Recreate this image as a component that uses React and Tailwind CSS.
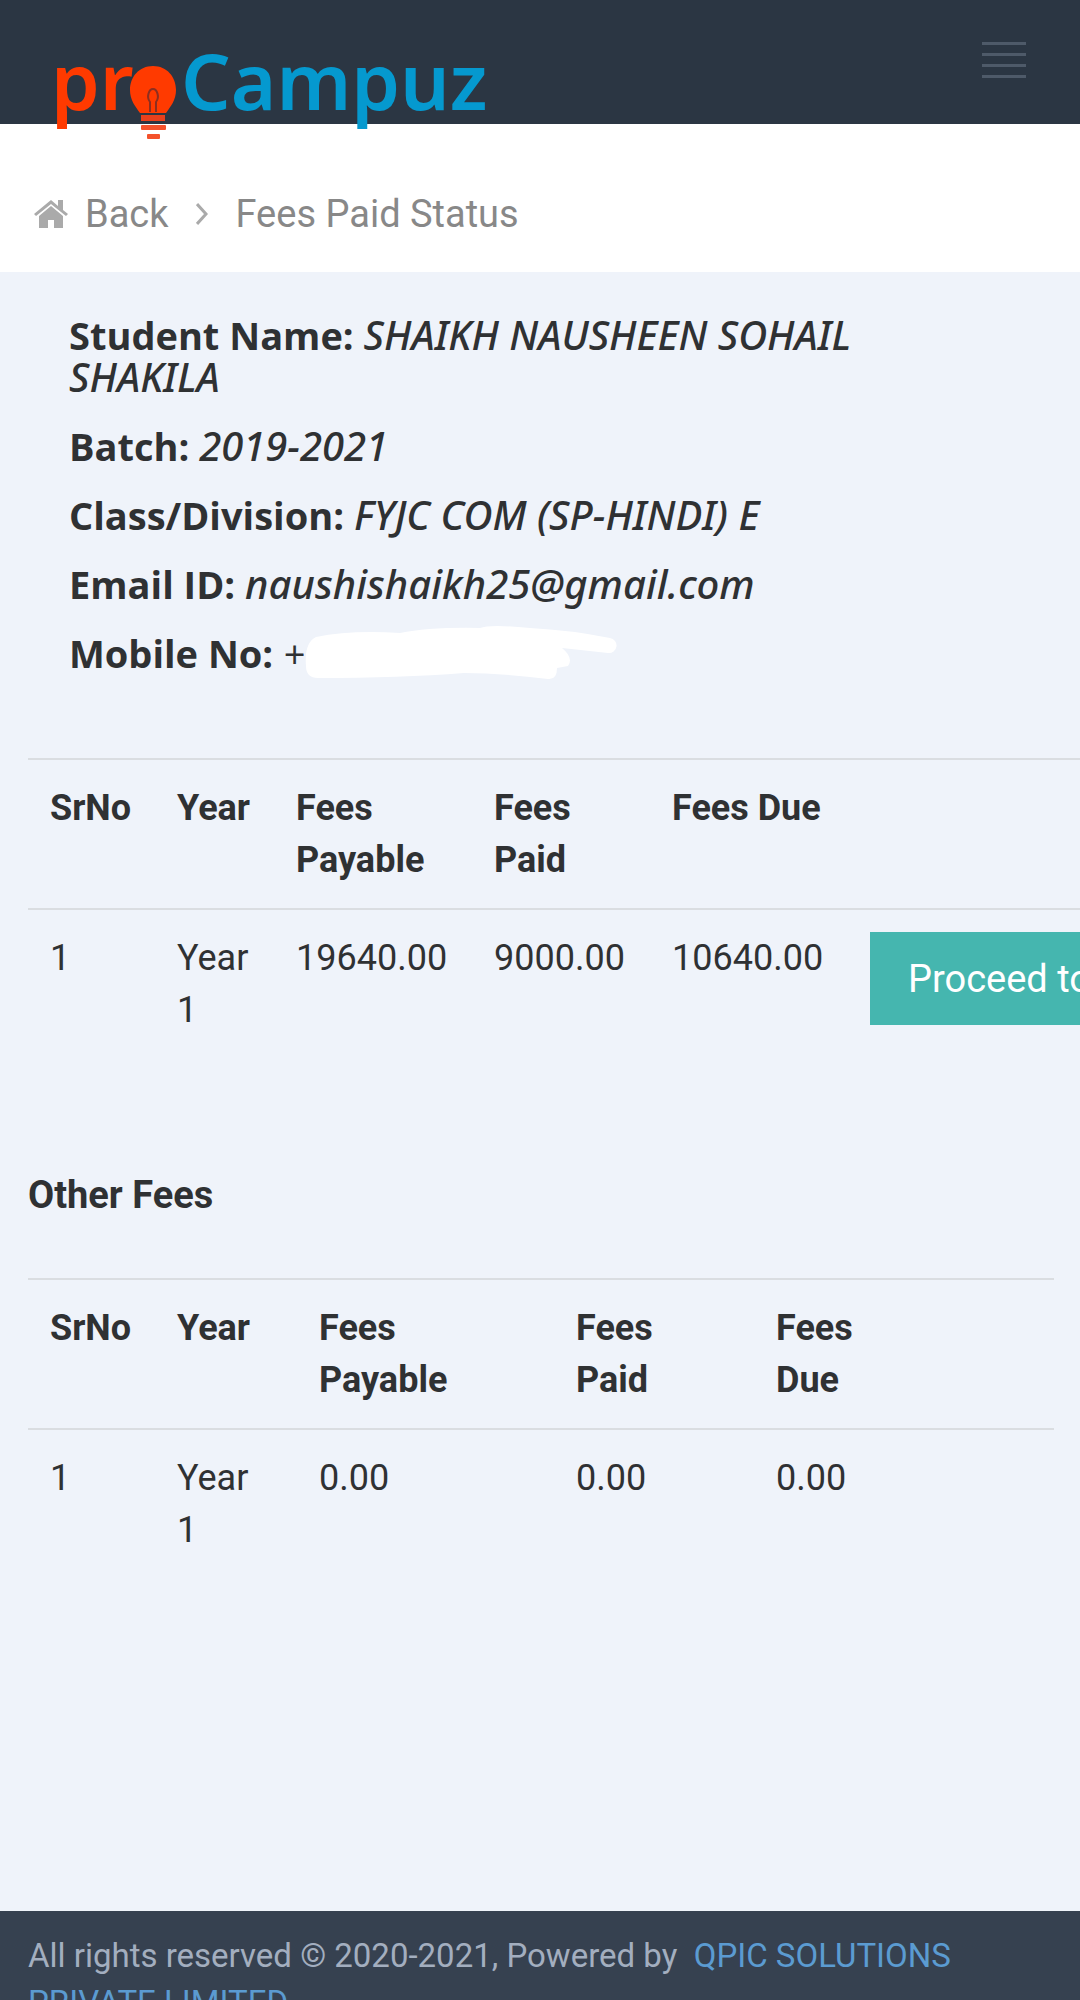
import React from 'react';

const STUDENT = [
  { label: 'Student Name:', value: 'SHAIKH NAUSHEEN SOHAIL SHAKILA' },
  { label: 'Batch:', value: '2019-2021' },
  { label: 'Class/Division:', value: 'FYJC COM (SP-HINDI) E' },
  { label: 'Email ID:', value: 'naushishaikh25@gmail.com' },
];

const Logo = () => (
  <svg width="460" height="104" viewBox="40 40 460 104" role="img" aria-label="proCampuz">
    <g fontSize="78" fontWeight="600" fontFamily="'Noto Sans', sans-serif">
      <text x="51" y="110" fill="#ff3a00">pr</text>
      <text x="181" y="110" fill="#0599cf">Campuz</text>
    </g>
    <path d="M153 66C139 66 130 77 130 90C130 100 135 106 140 113H166C171 106 176 100 176 90C176 77 167 66 153 66Z" fill="#ff3a00" />
    <path d="M150 112V102C146 97 149 89 153 89C157 89 160 97 156 102V112" fill="none" stroke="#8c2f20" strokeWidth="2" />
    <rect x="141" y="115" width="24" height="6" fill="#e8401c" />
    <rect x="141" y="125" width="25" height="5" rx="1" fill="#f4522c" />
    <rect x="147" y="134" width="13" height="5" rx="1" fill="#f4522c" />
  </svg>
);

const Header = () => (
  <header className="relative z-10 flex h-[124px] shrink-0 items-start justify-between bg-[#2b3643] pr-[54px] pl-10">
    <a href="#home" className="pt-10">
      <Logo />
    </a>
    <button type="button" aria-label="Toggle menu" className="mt-[42px] flex flex-col gap-2">
      {[0, 1, 2, 3].map((bar) => (
        <span key={bar} className="h-[3px] w-11 bg-[#4e5a69]" />
      ))}
    </button>
  </header>
);

const Breadcrumb = () => (
  <nav className="flex h-[148px] shrink-0 items-center bg-white pt-8 pl-[34px] text-[38px] leading-[54px] text-[#888888]">
    <svg width="34" height="30" viewBox="0 0 34 30" fill="#aaaaaa" aria-hidden="true">
      <path d="M17 7L5 17v12h9v-8h6v8h9V17z" />
      <path d="M17 1L0 15l2 2L17 5l15 12 2-2-5-4V1h-5v6z" />
    </svg>
    <a href="#back" className="ml-[17px]">Back</a>
    <svg className="ml-[27px]" width="12" height="22" viewBox="0 0 12 22" fill="none" stroke="#aaaaaa" strokeWidth="3" aria-hidden="true">
      <path d="M1 1l9 10L1 21" />
    </svg>
    <span className="ml-7">Fees Paid Status</span>
  </nav>
);

const StudentDetails = () => (
  <section className="flex flex-col gap-[27px] pr-[200px] pl-[69px] font-['Open_Sans',sans-serif] text-[38px] leading-[42px]">
    {STUDENT.map((item) => (
      <p key={item.label}>
        <strong className="font-bold">{item.label}</strong>{' '}
        <em className="font-['Noto_Sans',sans-serif] text-[40px] font-medium">{item.value}</em>
      </p>
    ))}
    <p className="relative">
      <strong className="font-bold">Mobile No:</strong> <em>+</em>
      <svg className="absolute -top-2 left-[234px]" width="316" height="56" viewBox="303 626 316 56" fill="#ffffff" aria-hidden="true">
        <path d="M316 639Q350 632 400 635Q430 629 480 630Q490 626 530 630Q570 632 610 640A7 7 0 0 1 608 655L562 650Q574 660 568 668L557 670Q557 682 548 681Q500 675 464 675Q400 680 318 680Q306 680 306 668Q304 645 316 639Z" />
      </svg>
    </p>
  </section>
);

const FeesTable = ({ columns, row, action, className }) => (
  <table className={`text-left text-[36px] leading-[52px] ${className}`}>
    <thead>
      <tr className="border-y-2 border-[#dadde1]">
        {columns.map((column) => (
          <th key={column.name} scope="col" className={`px-[22px] py-[22px] align-top font-bold ${column.width}`}>
            {column.name}
          </th>
        ))}
        <td />
      </tr>
    </thead>
    <tbody>
      <tr>
        {row.map((cell, i) => (
          <td key={columns[i].name} className="px-[22px] py-[22px] align-top">{cell}</td>
        ))}
        <td className="px-[22px] pt-[22px] align-top">{action}</td>
      </tr>
    </tbody>
  </table>
);

const Footer = () => (
  <footer className="shrink-0 bg-[#364150] px-7 py-[21px] text-[33px] leading-[47px] text-[#a3aebf]">
    All rights reserved © 2020-2021, Powered by&nbsp;{' '}
    <a href="#qpic" className="text-[#5b9bd1]">QPIC SOLUTIONS PRIVATE LIMITED</a>
  </footer>
);

export default function App() {
  return (
    <div className="flex h-screen flex-col overflow-hidden bg-[#eff3fa] font-[Roboto,sans-serif] text-[#2f3133]">
      <Header />
      <Breadcrumb />
      <main className="flex-1 shrink-0 pt-[42px] pb-[333px]">
        <StudentDetails />
        <div className="mt-[84px] overflow-hidden pl-7">
          <FeesTable
            className="w-[1200px] table-fixed"
            columns={[
              { name: 'SrNo', width: 'w-[127px]' },
              { name: 'Year', width: 'w-[119px]' },
              { name: 'Fees Payable', width: 'w-[198px]' },
              { name: 'Fees Paid', width: 'w-[178px]' },
              { name: 'Fees Due', width: 'w-[198px]' },
            ]}
            row={['1', 'Year 1', '19640.00', '9000.00', '10640.00']}
            action={
              <button type="button" className="h-[93px] bg-[#45b6af] px-[38px] text-[38px] whitespace-nowrap text-white">
                Proceed to Pay
              </button>
            }
          />
        </div>
        <h2 className="mt-[110px] px-7 text-[38px] leading-[54px] font-bold">Other Fees</h2>
        <div className="mt-[56px] pr-[26px] pl-7">
          <FeesTable
            className="w-full table-fixed"
            columns={[
              { name: 'SrNo', width: 'w-[127px]' },
              { name: 'Year', width: 'w-[142px]' },
              { name: 'Fees Payable', width: 'w-[257px]' },
              { name: 'Fees Paid', width: 'w-[200px]' },
              { name: 'Fees Due', width: 'w-[130px]' },
            ]}
            row={['1', 'Year 1', '0.00', '0.00', '0.00']}
          />
        </div>
      </main>
      <Footer />
    </div>
  );
}
